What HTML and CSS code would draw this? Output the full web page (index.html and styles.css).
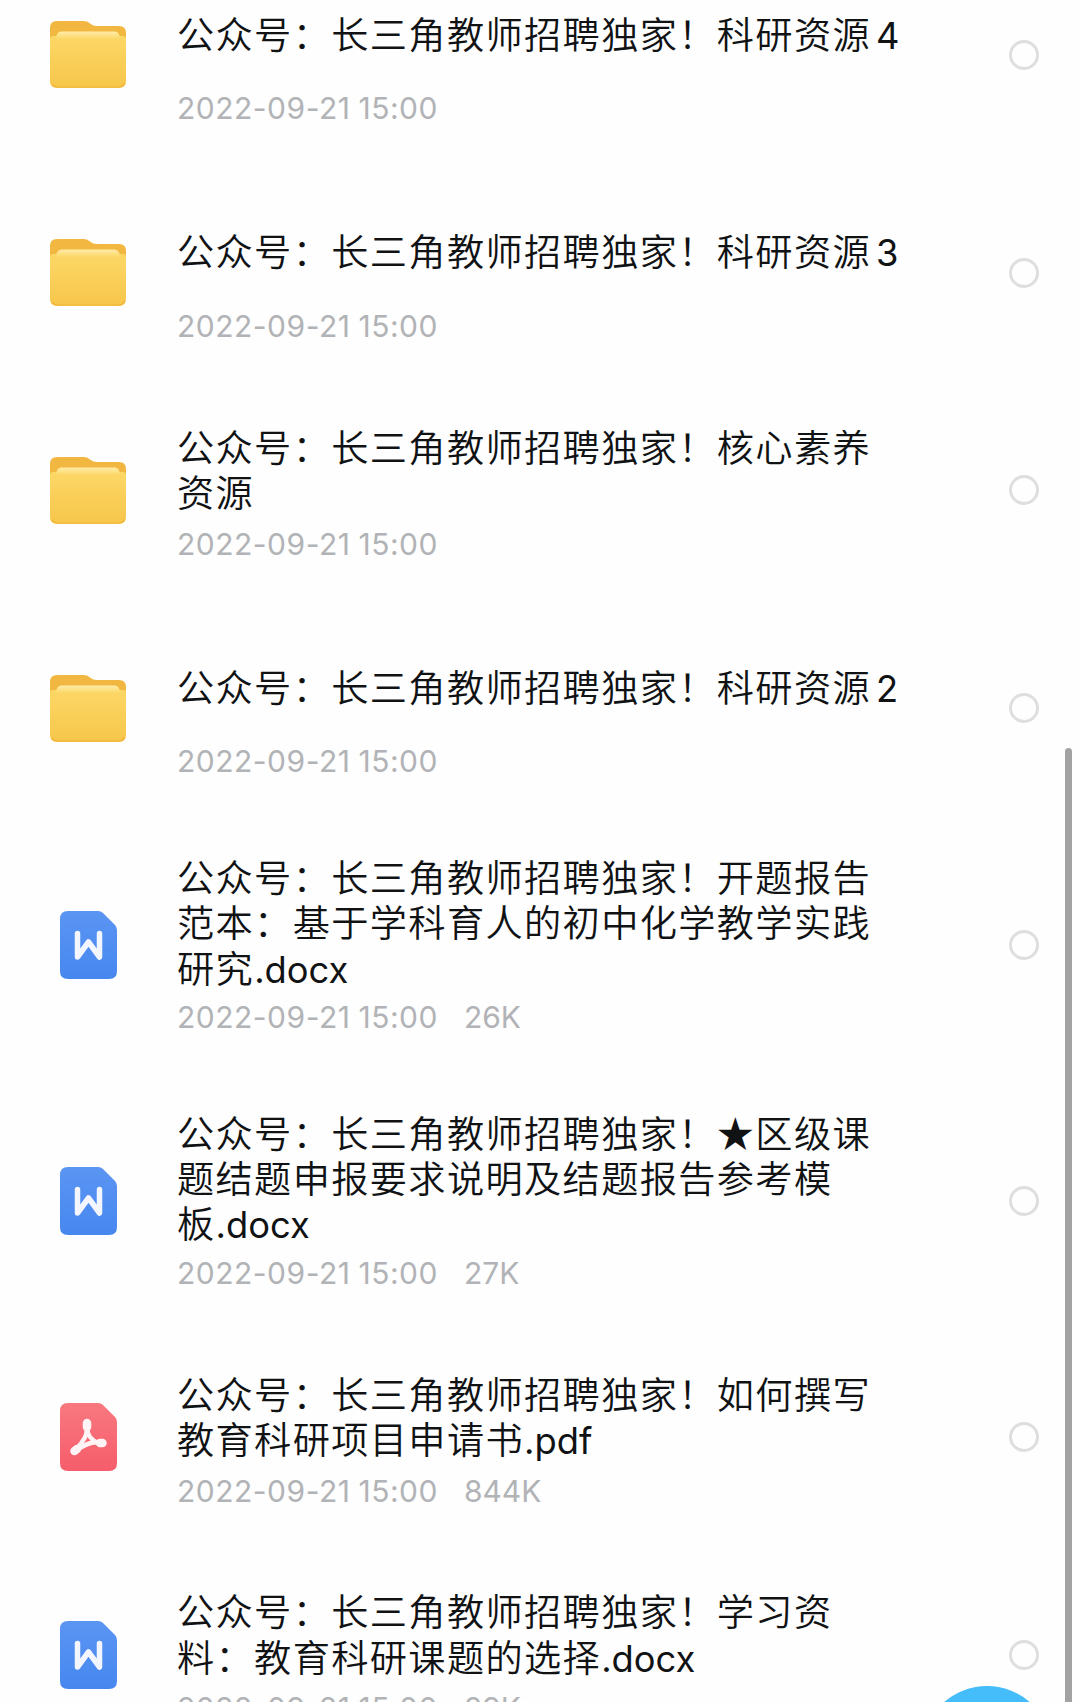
FILE: index.html
```html
<!DOCTYPE html>
<html lang="zh-CN">
<head>
<meta charset="utf-8">
<title>文件列表</title>
<link rel="stylesheet" href="styles.css">
</head>
<body>
<svg class="defs" aria-hidden="true">
  <defs>
    <linearGradient id="folder-front" x1="0" y1="0" x2="0" y2="1"><stop offset="0" stop-color="#fcd766"/><stop offset="1" stop-color="#f7c64a"/></linearGradient>
    <linearGradient id="folder-lip" x1="0" y1="0" x2="0" y2="1"><stop offset="0" stop-color="#ffeca8"/><stop offset="1" stop-color="#fcd766"/></linearGradient>
    <linearGradient id="doc-blue" x1="0" y1="0" x2="0" y2="1"><stop offset="0" stop-color="#5b95f3"/><stop offset="1" stop-color="#4687ef"/></linearGradient>
    <linearGradient id="doc-red" x1="0" y1="0" x2="0" y2="1"><stop offset="0" stop-color="#f8787f"/><stop offset="1" stop-color="#f65d6b"/></linearGradient>
    <symbol id="folder" viewBox="0 0 76 67">
      <path d="M0 7Q0 0 7 0H34Q38 0 40 2.500Q43 5 47 5H69Q76 5 76 12V30H0Z" fill="#f1b740"/>
      <path d="M0 18Q0 15 3 15H73Q76 15 76 18V60Q76 67 69 67H7Q0 67 0 60Z" fill="url(#folder-front)"/>
      <path d="M6 17Q7 10.500 11 10.500H65Q69 10.500 70 17V18H6Z" fill="url(#folder-lip)"/>
      <path d="M2 63Q4 66 8 66H68Q73 66 74.500 62" fill="none" stroke="#edb53c" stroke-width="1.200"/>
    </symbol>
    <symbol id="word" viewBox="0 0 57 68">
      <path d="M8 0H38Q41 0 43 2L55 14Q57 16 57 19V60Q57 68 49 68H8Q0 68 0 60V8Q0 0 8 0Z" fill="url(#doc-blue)"/>
      <path d="M17.500 22.500V46L28.500 31L39.500 46V22.500" fill="none" stroke="#f3f6ff" stroke-width="5.500" stroke-linecap="round" stroke-linejoin="round"/>
    </symbol>
    <symbol id="pdf" viewBox="0 0 57 68">
      <path d="M8 0H38Q41 0 43 2L55 14Q57 16 57 19V60Q57 68 49 68H8Q0 68 0 60V8Q0 0 8 0Z" fill="url(#doc-red)"/>
      <path d="M27 20C27 29 28 33 33 37C37 40 38 40 42.500 40M27 20C27 31 26 34 22 39C19 43 18 45 14.500 48M42.500 40C33 38 28 40 14.500 48" fill="none" stroke="#fff4f5" stroke-width="4.500" stroke-linecap="round" stroke-linejoin="round"/>
      <path d="M27 20V24M42.500 40H40M14.500 48L17 46" stroke="#fff4f5" stroke-width="8.500" stroke-linecap="round"/>
    </symbol>
  </defs>
</svg>
<main class="screen">
  <ul class="files">
    <li class="file">
      <svg class="icon icon-folder"><use href="#folder"/></svg>
      <div class="info"><div class="title">公众号：长三角教师招聘独家！科研资源<span class="latin number">4</span></div><div class="meta">2022-09-21<span class="time">15:00</span></div></div>
      <span class="radio"></span>
    </li>
    <li class="file">
      <svg class="icon icon-folder"><use href="#folder"/></svg>
      <div class="info"><div class="title">公众号：长三角教师招聘独家！科研资源<span class="latin number">3</span></div><div class="meta">2022-09-21<span class="time">15:00</span></div></div>
      <span class="radio"></span>
    </li>
    <li class="file">
      <svg class="icon icon-folder"><use href="#folder"/></svg>
      <div class="info"><div class="title">公众号：长三角教师招聘独家！核心素养<br>资源</div><div class="meta">2022-09-21<span class="time">15:00</span></div></div>
      <span class="radio"></span>
    </li>
    <li class="file">
      <svg class="icon icon-folder"><use href="#folder"/></svg>
      <div class="info"><div class="title">公众号：长三角教师招聘独家！科研资源<span class="latin number">2</span></div><div class="meta">2022-09-21<span class="time">15:00</span></div></div>
      <span class="radio"></span>
    </li>
    <li class="file file-tall">
      <svg class="icon icon-doc"><use href="#word"/></svg>
      <div class="info"><div class="title">公众号：长三角教师招聘独家！开题报告<br>范本：基于学科育人的初中化学教学实践<br>研究<span class="latin">.docx</span></div><div class="meta">2022-09-21<span class="time">15:00</span><span class="size">26K</span></div></div>
      <span class="radio"></span>
    </li>
    <li class="file file-tall">
      <svg class="icon icon-doc"><use href="#word"/></svg>
      <div class="info"><div class="title">公众号：长三角教师招聘独家！★区级课<br>题结题申报要求说明及结题报告参考模<br>板<span class="latin">.docx</span></div><div class="meta">2022-09-21<span class="time">15:00</span><span class="size">27K</span></div></div>
      <span class="radio"></span>
    </li>
    <li class="file">
      <svg class="icon icon-doc"><use href="#pdf"/></svg>
      <div class="info"><div class="title">公众号：长三角教师招聘独家！如何撰写<br>教育科研项目申请书<span class="latin">.pdf</span></div><div class="meta">2022-09-21<span class="time">15:00</span><span class="size">844K</span></div></div>
      <span class="radio"></span>
    </li>
    <li class="file">
      <svg class="icon icon-doc"><use href="#word"/></svg>
      <div class="info"><div class="title">公众号：长三角教师招聘独家！学习资<br>料：教育科研课题的选择<span class="latin">.docx</span></div><div class="meta">2022-09-21<span class="time">15:00</span><span class="size">29K</span></div></div>
      <span class="radio"></span>
    </li>
  </ul>
  <div class="fab"></div>
  <div class="scrollbar"></div>
</main>
</body>
</html>
```
FILE: styles.css
```css
* { box-sizing: border-box; }
body { margin: 0; background: #fefefe; }
.defs { position: absolute; width: 0; height: 0; }
.screen {
  position: relative;
  height: 1702px;
  overflow: hidden;
  font-family: "Noto Sans CJK SC", sans-serif;
}
.files { list-style: none; margin: -54px 0 0; padding: 0; }
.file {
  display: grid;
  grid-template-columns: 76px 1fr 30px;
  column-gap: 51px;
  align-items: center;
  height: 217.800px;
  padding: 0 41px 0 50px;
}
.file-tall { height: 255.700px; }
.icon { display: block; justify-self: center; }
.icon-folder { width: 76px; height: 67px; }
.icon-doc { width: 57px; height: 68px; }
.info { align-self: start; padding-top: 42px; white-space: nowrap; }
.file-tall .info { padding-top: 37px; }
.title {
  display: flow-root;
  height: 91px;
  color: #101214;
  font-size: 37.200px;
  font-weight: 350;
  letter-spacing: 1.370px;
  line-height: 45.200px;
}
.title:not(:has(br)) { padding-top: 22.500px; }
.file-tall .title { height: 136.500px; }
.latin {
  font-family: Inter, sans-serif;
  font-size: 36.300px;
  font-weight: 380;
  letter-spacing: 0;
  line-height: 1;
}
.number { margin-left: 5px; }
.meta {
  display: flex;
  margin-top: 11px;
  color: #b1b3b6;
  font: 30px/36px Inter, sans-serif;
  letter-spacing: 0.500px;
}
.file-tall .meta { margin-top: 8.500px; }
.time { margin-left: 8px; }
.size { margin-left: 26px; letter-spacing: 0; }
.radio { width: 30px; height: 30px; border: 3px solid #dedede; border-radius: 50%; }
.fab {
  position: absolute;
  left: 922px;
  top: 1685.500px;
  width: 130px;
  height: 130px;
  border-radius: 50%;
  background: #46bdfb;
}
.scrollbar {
  position: absolute;
  right: 8px;
  top: 748px;
  width: 7px;
  height: 980px;
  border-radius: 4px;
  background: #a2a2a2;
}
```
